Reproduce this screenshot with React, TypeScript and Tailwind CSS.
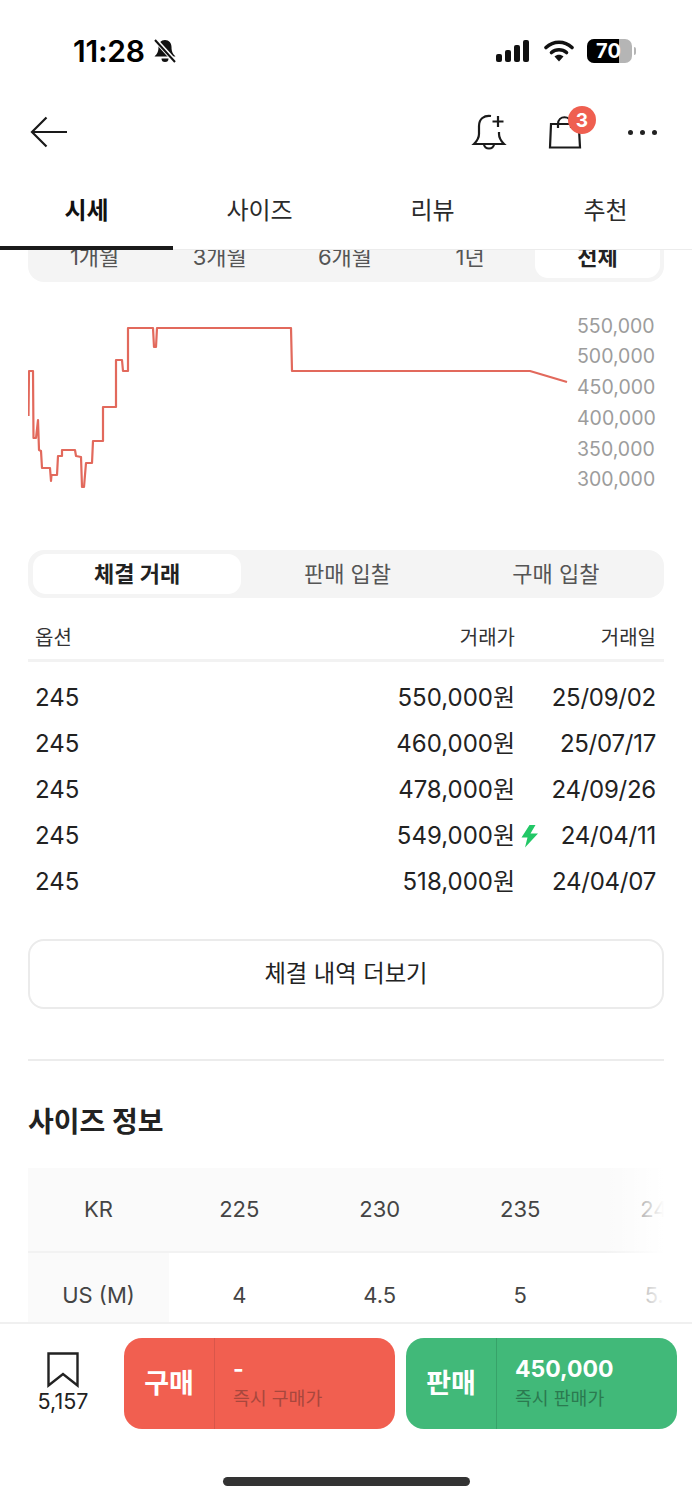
import React from "react";

const rows = [
  ["245", "550,000원", "25/09/02", false],
  ["245", "460,000원", "25/07/17", false],
  ["245", "478,000원", "24/09/26", false],
  ["245", "549,000원", "24/04/11", true],
  ["245", "518,000원", "24/04/07", false],
] as const;

const line =
  "28.5,416 29,371 33,371 33.5,438 36,438 38,420 39,450 41,451 42,468 50,468 51,481 51.5,475 57,475 58,456 62,456 62,450 75,450 76,456 81,457 82,487 84,487 86,463 92,463 93,441 103,441 103,407 116,407 116,360 122,360 123,371 128,371 128,328 153,328 154,347 156,347 157,328 291,328 292,371 530,371 567,382";

function StatusBar() {
  return (
    <div className="h-[100px] flex items-start justify-between pt-[32px] pl-[73px] pr-[56px]">
      <div className="flex items-center gap-[7px]">
        <span className="text-[30px] leading-[38px] font-semibold tracking-[-0.2px] text-black">11:28</span>
        <svg width="26" height="26" viewBox="0 0 26 26">
          <path d="M13 2c-4 0-6.500 3-6.500 7 0 5-1.500 7-4 9.500h21c-2.500-2.500-4-4.500-4-9.500 0-4-2.500-7-6.500-7z" fill="#111" />
          <path d="M9.500 20.500a3.500 3.500 0 0 0 7 0z" fill="#111" />
          <path d="M3 1.500l20 22" stroke="#fff" strokeWidth="4.500" />
          <path d="M3 2l20 22" stroke="#111" strokeWidth="2" />
        </svg>
      </div>
      <div className="flex items-center gap-[13px] h-[38px]">
        <svg width="36" height="24" viewBox="0 0 36 24">
          <rect x="1" y="15" width="6" height="8" rx="2" fill="#111" />
          <rect x="10" y="11" width="6" height="12" rx="2" fill="#111" />
          <rect x="19" y="6" width="6" height="17" rx="2" fill="#111" />
          <rect x="28" y="1" width="6" height="22" rx="2" fill="#111" />
        </svg>
        <svg width="30" height="24" viewBox="0 0 30 24">
          <path d="M2 8.500C9.500 1.500 20.500 1.500 28 8.500" fill="none" stroke="#111" strokeWidth="3.600" strokeLinecap="round" />
          <path d="M7.500 13.500C11.800 9.800 18.200 9.800 22.500 13.500" fill="none" stroke="#111" strokeWidth="3.600" strokeLinecap="round" />
          <path d="M10.500 17.500c2.700-2.300 6.300-2.300 9 0L15 22.500z" fill="#111" />
        </svg>
        <div className="flex items-center gap-[2px]">
          <div className="relative w-[45px] h-[24px] rounded-[7px] overflow-hidden bg-[#b5b5b5] flex">
            <div className="w-[32px] bg-black" />
            <span className="absolute inset-0 flex items-center justify-center pr-[2px] text-[20px] leading-none font-bold text-white">70</span>
          </div>
          <div className="w-[2px] h-[8px] rounded-r bg-[#b5b5b5]" />
        </div>
      </div>
    </div>
  );
}

function Header() {
  return (
    <div className="h-[64px] flex items-center justify-between pl-[30px] pr-[35px]">
      <svg width="38" height="32" viewBox="0 0 38 32" fill="none" stroke="#1a1a1a" strokeWidth="2.200">
        <path d="M37 16H2M16.500 1.500L2 16l14.500 14.500" />
      </svg>
      <div className="flex items-center">
        <svg width="36" height="38" viewBox="0 0 36 38" fill="none" stroke="#1a1a1a" strokeWidth="2.200">
          <path d="M20 3c-7-1-12 3-12 10v8c0 4-2 7-5 10h30c-3-3-5-6-5-10v-2" />
          <path d="M13 31c0 6 10 6 10 0" />
          <path d="M27 3v11M21.500 8.500h11" />
        </svg>
        <div className="relative ml-[41px] w-[34px] h-[34px]">
          <svg width="34" height="34" viewBox="0 0 34 34" fill="none" stroke="#1a1a1a" strokeWidth="2.200">
            <path d="M25 9H3l-1 23.500h30L31 14" />
            <path d="M10 13V9c0-9 13-9 13 0v4" />
          </svg>
          <div className="absolute left-[20px] top-[-9px] w-[28px] h-[28px] rounded-full bg-[#ef5f50] flex items-center justify-center text-white text-[19px] font-bold leading-none">3</div>
        </div>
        <div className="ml-[46px] flex gap-[7px]">
          <div className="w-[5px] h-[5px] rounded-full bg-[#222]" />
          <div className="w-[5px] h-[5px] rounded-full bg-[#222]" />
          <div className="w-[5px] h-[5px] rounded-full bg-[#222]" />
        </div>
      </div>
    </div>
  );
}

function Tabs() {
  return (
    <div className="h-[86px] grid grid-cols-4 border-b border-[#ececec] bg-white relative z-10 text-[24px] text-[#2b2b2b]">
      <div className="relative flex items-center justify-center pt-[8px] font-bold text-[#111]">
        시세
        <div className="absolute left-0 right-0 bottom-[-1px] h-[4px] bg-[#1a1a1a]" />
      </div>
      <div className="flex items-center justify-center pt-[8px]">사이즈</div>
      <div className="flex items-center justify-center pt-[8px]">리뷰</div>
      <div className="flex items-center justify-center pt-[8px]">추천</div>
    </div>
  );
}

function Segment({ items, active, clipped }: { items: string[]; active: number; clipped?: boolean }) {
  return (
    <div className={clipped ? "mx-[28px] h-[48px] rounded-[16px] bg-[#f4f4f4] px-[4px] pt-[2px] pb-[4px] flex text-[22px] text-[#555]" : "mx-[28px] h-[48px] rounded-[16px] bg-[#f4f4f4] p-[4px] flex text-[22px] text-[#555]"}>
      {items.map((t, i) => (
        <div
          key={t}
          className={
            i === active
              ? clipped
                ? "flex-1 ml-[2px] rounded-[13px] bg-white flex items-center justify-center font-bold text-[#222]"
                : "flex-1 ml-[1px] mr-[2px] rounded-[13px] bg-white flex items-center justify-center font-bold text-[#222]"
              : "flex-1 flex items-center justify-center"
          }
        >
          {t}
        </div>
      ))}
    </div>
  );
}

function Chart() {
  return (
    <div className="h-[268px] flex">
      <svg className="ml-[28px] shrink-0" width="549" height="268" viewBox="28 282 549 268" fill="none">
        <polyline points={line} stroke="#e2695c" strokeWidth="2.200" strokeLinejoin="round" />
      </svg>
      <div className="pt-[28.5px] text-[19.500px] leading-[30.800px] text-[#9c9c9c]">
        <div>550,000</div>
        <div>500,000</div>
        <div>450,000</div>
        <div>400,000</div>
        <div>350,000</div>
        <div>300,000</div>
      </div>
    </div>
  );
}

function Trades() {
  return (
    <div className="mx-[28px]">
      <div className="h-[64px] pt-[24px] pl-[7px] pr-[8px] border-b-[3px] border-[#f2f2f2] flex text-[20px] leading-[32px] text-[#333]">
        <div className="flex-1">옵션</div>
        <div>거래가</div>
        <div className="w-[141px] text-right">거래일</div>
      </div>
      <div className="pt-[13px] pl-[7px] pr-[8px] text-[24px] leading-[46px] text-[#222]">
        {rows.map(([o, p, d, fast]) => (
          <div key={d} className="flex h-[46px]">
            <div className="flex-1">{o}</div>
            <div>{p}</div>
            <div className="w-[141px] flex items-center">
              {fast && (
                <svg className="ml-[5px]" width="19" height="24" viewBox="0 0 19 24">
                  <path d="M9.500 1L1.500 13.500h6L5 23.500 18 9.500h-7.500L15.500 1z" fill="#22c766" />
                </svg>
              )}
              <span className="ml-auto tracking-[-0.25px]">{d}</span>
            </div>
          </div>
        ))}
      </div>
      <div className="mt-[34px] h-[70px] rounded-[16px] border-2 border-[#ebebeb] flex items-center justify-center text-[23.300px] text-[#222]">
        체결 내역 더보기
      </div>
      <div className="mt-[50px] h-[2px] bg-[#ececec]" />
    </div>
  );
}

function SizeTable() {
  const kr = ["225", "230", "235", "240"];
  const us = ["4", "4.5", "5", "5.5"];
  return (
    <div className="mx-[28px] relative overflow-hidden text-[22px] text-[#444]">
      <div className="flex h-[85px] bg-[#fafafa] border-b-2 border-[#f2f2f2]">
        <div className="w-[141px] shrink-0 flex items-center justify-center">KR</div>
        {kr.map((v) => (
          <div key={v} className="w-[140.500px] shrink-0 flex items-center justify-center">{v}</div>
        ))}
      </div>
      <div className="flex h-[85px]">
        <div className="w-[141px] shrink-0 flex items-center justify-center bg-[#fafafa]">US (M)</div>
        {us.map((v) => (
          <div key={v} className="w-[140.500px] shrink-0 flex items-center justify-center">{v}</div>
        ))}
      </div>
      <div className="absolute top-0 bottom-0 right-0 w-[60px] bg-gradient-to-r from-white/0 to-white" />
    </div>
  );
}

function ActionButton({ color, label, value, sub, divider, subColor }: { color: string; label: string; value: string; sub: string; divider: string; subColor: string }) {
  return (
    <div className={`w-[271px] h-[91px] rounded-[18px] flex text-white ${color}`}>
      <div className={`w-[91px] shrink-0 flex items-center justify-center pt-[2px] text-[27px] font-bold border-r ${divider}`}>{label}</div>
      <div className="pl-[18px] pt-[15px]">
        <div className="text-[23px] leading-[32px] font-bold">{value}</div>
        <div className={`text-[18.300px] leading-[26px] ${subColor}`}>{sub}</div>
      </div>
    </div>
  );
}

function BottomBar() {
  return (
    <div className="h-[178px] shrink-0 bg-white border-t-2 border-[#f0f0f0] relative">
      <div className="pt-[14px] flex items-start">
        <div className="w-[124px] shrink-0 flex flex-col items-center pt-[14px] pl-[2px]">
          <svg width="32" height="36" viewBox="0 0 32 36" fill="none" stroke="#222" strokeWidth="2.400">
            <path d="M1.500 1.500h29v32L16 22 1.500 33.500z" />
          </svg>
          <div className="text-[21.500px] leading-[26px] text-[#222]">5,157</div>
        </div>
        <ActionButton color="bg-[#f15f50]" label="구매" value="-" sub="즉시 구매가" divider="border-[#d9564a]" subColor="text-[#a8473d]" />
        <div className="w-[11px]" />
        <ActionButton color="bg-[#41b979]" label="판매" value="450,000" sub="즉시 판매가" divider="border-[#37a269]" subColor="text-[#2b7a50]" />
      </div>
      <div className="absolute left-[223px] top-[153px] w-[247px] h-[9px] rounded-full bg-[#333]" />
    </div>
  );
}

export default function App() {
  return (
    <div className="w-[692px] h-[1500px] bg-white overflow-hidden flex flex-col font-['Inter','Noto_Sans_CJK_KR',sans-serif]">
      <StatusBar />
      <Header />
      <Tabs />
      <div className="flex-1 min-h-0 overflow-hidden">
        <div className="-mt-[16px]">
          <Segment items={["1개월", "3개월", "6개월", "1년", "전체"]} active={4} clipped />
          <Chart />
          <Segment items={["체결 거래", "판매 입찰", "구매 입찰"]} active={0} />
          <Trades />
          <h2 className="mt-[41px] mx-[28px] text-[28px] leading-[40px] font-bold text-[#222]">사이즈 정보</h2>
          <div className="h-[26px]" />
          <SizeTable />
        </div>
      </div>
      <BottomBar />
    </div>
  );
}
